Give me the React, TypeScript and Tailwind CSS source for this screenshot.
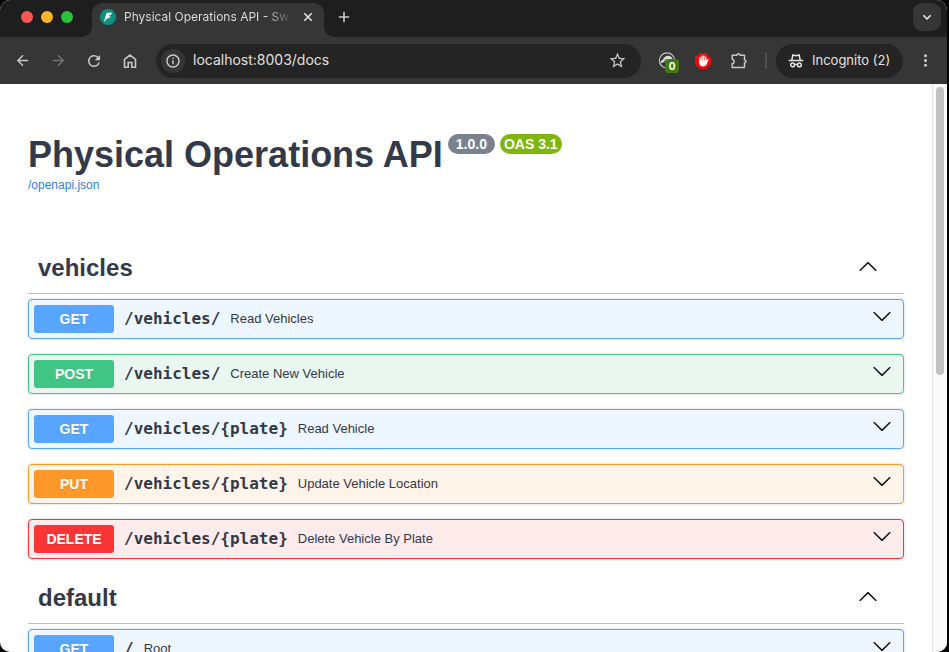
import type { ReactNode } from "react";
import { MdArrowBack, MdArrowForward, MdRefresh, MdMoreVert, MdStarOutline, MdInfoOutline } from "react-icons/md";

type Method = "GET" | "POST" | "PUT" | "DELETE";
type Operation = { method: Method; path: string; summary: string };

const rowStyle: Record<Method, string> = {
  GET: "border-[#58a5ff] bg-[#eef6ff]",
  POST: "border-[#41c884] bg-[#eaf7f0]",
  PUT: "border-[#fc982a] bg-[#fff4e9]",
  DELETE: "border-[#fb3536] bg-[#feebeb]",
};

const badgeStyle: Record<Method, string> = {
  GET: "bg-[#58a5ff]",
  POST: "bg-[#41c584]",
  PUT: "bg-[#fc982a]",
  DELETE: "bg-[#fb3536]",
};

const sections: { tag: string; operations: Operation[] }[] = [
  {
    tag: "vehicles",
    operations: [
      { method: "GET", path: "/vehicles/", summary: "Read Vehicles" },
      { method: "POST", path: "/vehicles/", summary: "Create New Vehicle" },
      { method: "GET", path: "/vehicles/{plate}", summary: "Read Vehicle" },
      { method: "PUT", path: "/vehicles/{plate}", summary: "Update Vehicle Location" },
      { method: "DELETE", path: "/vehicles/{plate}", summary: "Delete Vehicle By Plate" },
    ],
  },
  { tag: "default", operations: [{ method: "GET", path: "/", summary: "Root" }] },
];

function Chevron({ up = false }: { up?: boolean }) {
  return (
    <svg viewBox="0 0 20 20" className="size-5" fill="#111" aria-hidden="true">
      <path
        d={
          up
            ? "M17.418 14.908c.272.268.709.268.979 0s.271-.701 0-.969l-7.908-7.83c-.27-.268-.707-.268-.979 0l-7.908 7.83c-.27.268-.27.701 0 .969.271.268.709.268.979 0L10 7.767l7.418 7.141z"
            : "M17.418 6.109c.272-.268.709-.268.979 0s.271.701 0 .969l-7.908 7.83c-.27.268-.707.268-.979 0l-7.908-7.83c-.27-.268-.27-.701 0-.969.271-.268.709-.268.979 0L10 13.25l7.418-7.141z"
        }
      />
    </svg>
  );
}

function IconButton({ label, children, className = "", color = "text-[#c7c7c7]" }: { label: string; children: ReactNode; className?: string; color?: string }) {
  return (
    <button type="button" aria-label={label} className={`flex size-5 shrink-0 items-center justify-center ${color} ${className}`}>
      {children}
    </button>
  );
}

function StrokeIcon({ d }: { d: string }) {
  return (
    <svg viewBox="0 0 16 16" className="size-4" fill="none" stroke="currentColor" strokeWidth="1.600" aria-hidden="true">
      <path d={d} />
    </svg>
  );
}

function TabStrip() {
  return (
    <div className="flex h-[37px] items-end bg-[#1e1e1e] pr-1.5">
      <div className="flex h-[34px] w-[82px] shrink-0 items-center gap-2 pb-1.5 pl-[21px]">
        <span className="size-3 rounded-full bg-[#ff5550]" />
        <span className="size-3 rounded-full bg-[#fdb429]" />
        <span className="size-3 rounded-full bg-[#28c337]" />
      </div>
      <div className="size-[10px] shrink-0 bg-[#363636]">
        <div className="size-full rounded-br-[10px] bg-[#1e1e1e]" />
      </div>
      <div className="flex h-[34px] w-[232px] shrink-0 items-center rounded-t-[10px] bg-[#363636] pb-1.5 pl-2">
        <svg viewBox="0 0 16 16" className="size-4 shrink-0" aria-hidden="true">
          <circle cx="8" cy="8" r="8" fill="#0b9082" />
          <path d="M6.600 3.700h5.600L10.600 6.300H9.200L8.600 7.300h2.100L9.300 9.300H7.500L3.800 12.900z" fill="#fff" />
        </svg>
        <span className="ml-2 w-[168px] overflow-hidden whitespace-nowrap bg-linear-to-r from-[#e3e3e3] from-85% to-transparent bg-clip-text text-[12px] leading-4 text-transparent">
          Physical Operations API - Swagger UI
        </span>
        <IconButton label="Close tab" className="ml-1.5" color="text-[#e3e3e3]">
          <StrokeIcon d="M4.300 4.300l7.400 7.400M11.700 4.300l-7.400 7.400" />
        </IconButton>
      </div>
      <div className="size-[10px] shrink-0 bg-[#363636]">
        <div className="size-full rounded-bl-[10px] bg-[#1e1e1e]" />
      </div>
      <div className="flex h-[34px] grow items-center justify-between pb-1.5">
        <IconButton label="New tab">
          <StrokeIcon d="M8 2.800v10.400M2.800 8h10.400" />
        </IconButton>
        <button type="button" aria-label="Search tabs" className="flex size-7 items-center justify-center rounded-[9px] bg-[#363636] text-[#e3e3e3]">
          <StrokeIcon d="M4.300 6.200L8 9.900l3.700-3.700" />
        </button>
      </div>
    </div>
  );
}

function Toolbar() {
  return (
    <div className="flex h-[47px] items-center bg-[#363636] pl-3">
      <div className="flex shrink-0 gap-4">
        <IconButton label="Back"><MdArrowBack size={17} /></IconButton>
        <IconButton label="Forward" color="text-[#757575]"><MdArrowForward size={17} /></IconButton>
        <IconButton label="Reload"><MdRefresh size={18} /></IconButton>
        <IconButton label="Home">
          <StrokeIcon d="M2.500 14.200V6.300L8 2l5.500 4.300v7.900h-3.700V9.500H6.200v4.700z" />
        </IconButton>
      </div>
      <div className="ml-4 flex h-[34px] grow items-center rounded-full bg-[#242424] pl-[5px] pr-3.5">
        <button type="button" aria-label="Site information" className="flex size-6 shrink-0 items-center justify-center rounded-full bg-[#363636] text-[#d5d5d5]">
          <MdInfoOutline size={16} />
        </button>
        <input
          aria-label="Address"
          defaultValue="localhost:8003/docs"
          className="ml-2 min-w-0 grow bg-transparent pb-0.5 text-[14px] text-[#e0e0e0] outline-none"
        />
        <IconButton label="Bookmark"><MdStarOutline size={19} /></IconButton>
      </div>
      <div className="ml-4 flex shrink-0 items-center gap-4">
        <button type="button" aria-label="Requests, 0 blocked" className="relative size-5 shrink-0">
          <svg viewBox="0 0 20 20" className="size-5" aria-hidden="true">
            <circle cx="10" cy="9.500" r="7.600" fill="none" stroke="#c4c4c4" strokeWidth="1.200" />
            <path d="M3.800 12.500c-.3-2 .8-3.300 2-3.700C7.200 5.500 10 4.300 12.500 5c2 .6 3 2.300 3.200 4H13l-1 3H8.500l-1-1.500z" fill="#ddd" />
            <path d="M7 11.500l1.500-3.200M10 10.500l.8-2.500" stroke="#555" strokeWidth=".8" />
          </svg>
          <span className="absolute left-2 top-2 flex size-3.5 items-center justify-center rounded-[3px] bg-[#427a12] text-[10px] font-bold leading-none text-white">0</span>
        </button>
        <IconButton label="Ad blocker">
          <svg viewBox="0 0 16 16" className="size-4" aria-hidden="true">
            <path d="M4.700 0h6.600L16 4.700v6.600L11.300 16H4.700L0 11.300V4.700z" fill="#e40d0d" />
            <path d="M5 9.500V4.700M6.900 8V3.200M8.800 8V2.900M10.700 8V4.200" stroke="#fff" strokeWidth="1.400" strokeLinecap="round" />
            <path d="M4.300 7.500h7.100l1-1.200c.7-.5 1.300.1 1 .8l-1.800 4.300c-.6 1.300-1.700 2-3.300 2-2.400 0-4-1.400-4-3.700z" fill="#fff" />
          </svg>
        </IconButton>
        <IconButton label="Extensions">
          <svg viewBox="0 0 18 18" className="size-[18px]" fill="none" stroke="currentColor" strokeWidth="1.500" strokeLinejoin="round" aria-hidden="true">
            <path d="M2.200 3.200H7C7.200 1.300 9.800 1.300 10 3.200h4.500V8c1.900.2 1.900 2.600 0 2.800v4.700H2.200v-3.800c2.600-.4 2.600-4 0-4.400z" />
          </svg>
        </IconButton>
      </div>
      <div className="ml-4 h-4 w-0.5 shrink-0 bg-[#505050]" />
      <button type="button" className="ml-[9px] flex h-[34px] w-[127px] shrink-0 items-center gap-2 rounded-full bg-[#242424] pl-3 text-[13px] text-[#e3e3e3]">
        <svg viewBox="0 0 16 16" className="size-4 shrink-0" fill="none" stroke="currentColor" strokeWidth="1.500" aria-hidden="true">
          <path d="M3.800 7l1.100-5 3.100.7 3.100-.7 1.100 5M.7 7.500h14.600" />
          <circle cx="4.600" cy="11.900" r="1.900" />
          <circle cx="11.400" cy="11.900" r="1.900" />
          <path d="M6.400 11.700q1.600-.8 3.200 0" />
        </svg>
        Incognito (2)
      </button>
      <IconButton label="Menu" className="mx-3"><MdMoreVert size={19} /></IconButton>
    </div>
  );
}

function OperationRow({ method, path, summary }: Operation) {
  return (
    <button type="button" className={`mb-[15px] flex h-10 w-full items-center rounded-[4px] border px-[5px] text-left shadow-[0_0_3px_rgba(0,0,0,0.19)] ${rowStyle[method]}`}>
      <span className={`flex h-7 w-20 shrink-0 items-center justify-center rounded-[3px] text-[14px] font-bold text-white [text-shadow:0_1px_0_rgba(0,0,0,0.1)] ${badgeStyle[method]}`}>
        {method}
      </span>
      <span className="ml-2.5 font-['DejaVu_Sans_Mono',monospace] text-[16px] font-bold">{path}</span>
      <span className="ml-2.5 grow text-[13px]">{summary}</span>
      <span className="mb-1.5 mr-1.5"><Chevron /></span>
    </button>
  );
}

function Documentation() {
  return (
    <main className="min-w-0 grow overflow-hidden px-7 pt-12 font-['Liberation_Sans',Arial,sans-serif] text-[#343948]">
      <header className="mb-[52px]">
        <h1 className="flex items-start text-[36px] font-bold leading-[46px]">
          Physical Operations API
          <span className="ml-[5px] mt-0.5 flex h-5 items-center rounded-full bg-[#7a818f] px-2 text-[14px] leading-none text-white">1.0.0</span>
          <span className="ml-[5px] mt-0.5 flex h-5 items-center rounded-full bg-[#7eb709] px-1 text-[14px] leading-none text-white">OAS 3.1</span>
        </h1>
        <a href="/openapi.json" className="block w-fit text-[12px] leading-[14px] text-[#3080e2]">/openapi.json</a>
      </header>
      {sections.map(({ tag, operations }) => (
        <section key={tag}>
          <h2 className="mb-[5px] border-b border-[#bcbdc0] text-[24px] font-bold">
            <button type="button" className="flex h-[49px] w-full items-center justify-between pb-0.5 pl-2.5 pr-[26px]">
              {tag}
              <span className="mb-1"><Chevron up /></span>
            </button>
          </h2>
          {operations.map((operation) => (
            <OperationRow key={operation.method + operation.path} {...operation} />
          ))}
        </section>
      ))}
    </main>
  );
}

export default function App() {
  return (
    <div className="h-screen overflow-hidden bg-black pr-0.5">
      <div className="flex h-full flex-col overflow-hidden rounded-[10px] bg-white font-[Inter,sans-serif]">
        <div className="shrink-0">
          <TabStrip />
          <Toolbar />
        </div>
        <div className="flex min-h-0 grow">
          <Documentation />
          <div className="w-[15px] shrink-0 border-l border-[#e4e4e4] bg-[#fafafa] px-[3px] pt-[3px]">
            <div className="h-[51%] w-2 rounded-full bg-[#c1c1c1]" />
          </div>
        </div>
      </div>
    </div>
  );
}
